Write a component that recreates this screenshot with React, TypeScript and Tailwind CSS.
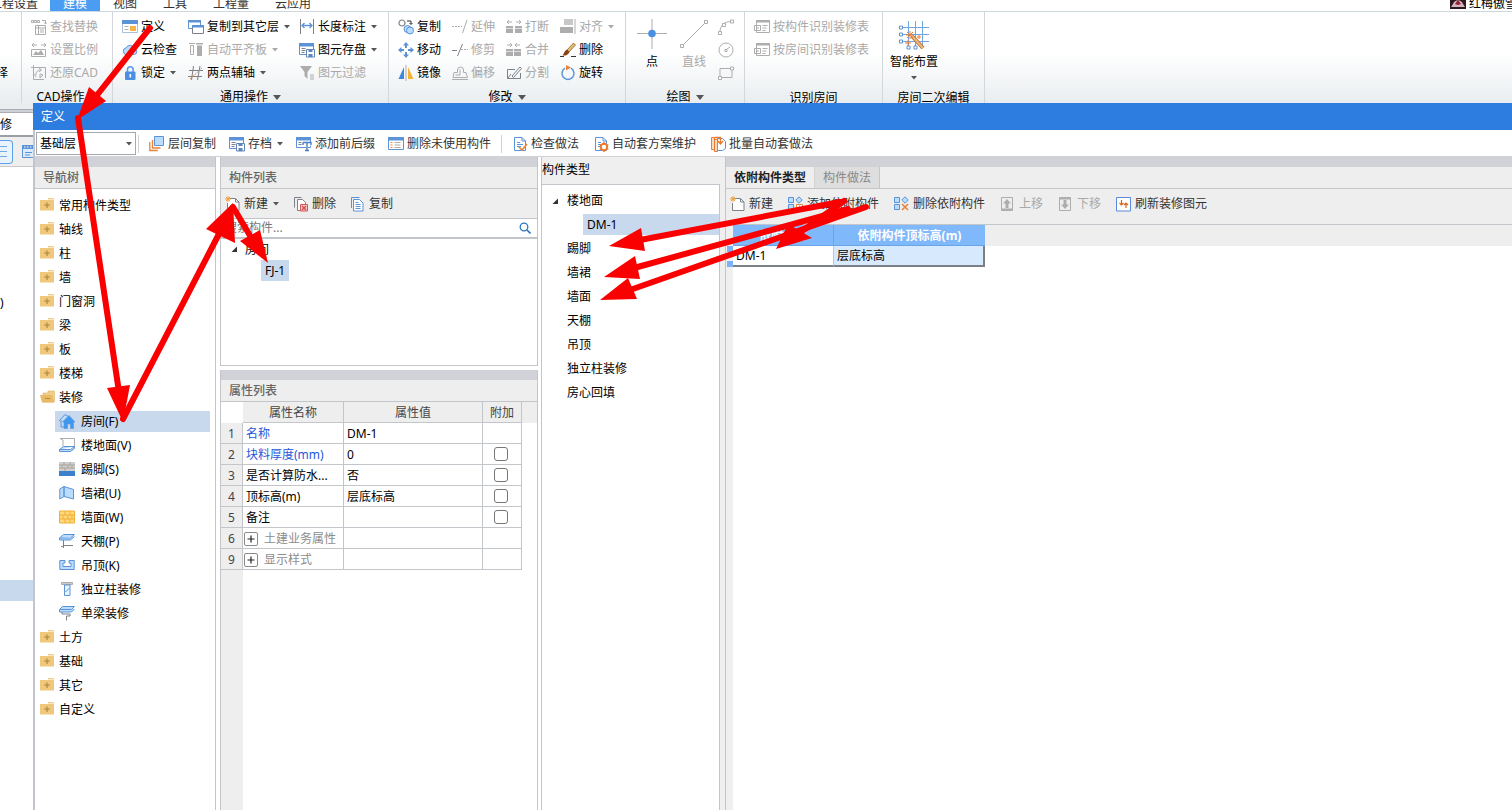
import type { ReactNode } from "react";
import clsx from "clsx";

const B = "#5b93d6";
const LB = "#b9dcff";
const G = "#adadad";
const O = "#e8833a";
const D = "#7d8188";

const sheet = (color: string) => (
  <>
    <path d="M2.500 1.500h7.500l3.500 3.500v9.500h-11z" fill="#fff" stroke={color} />
    <path d="M10 1.500V5h3.500M5 6.500h3M5 8.500h6M5 10.500h4" stroke={color} fill="none" />
  </>
);

const dependent = (
  <>
    <path d="M.5 1.500h5v5h-5zM.5 8.500h5v5h-5z" fill={LB} stroke={B} />
    <path d="M11 .8 14.200 4 11 7.200 7.800 4z" fill={LB} stroke={B} />
  </>
);

const ICONS: Record<string, ReactNode> = {
  find: (
    <>
      <path d="M.5 1.500h2v2h-2zM3.500 1.500h2v2h-2zM6.500 1.500h2v2h-2z" stroke={G} fill="none" />
      <path d="M11 1.500h3.500v3M13 3.500l1.500 1.500L16 3.500" stroke={G} fill="none" />
      <path d="M4.500 6.500h10v9h-10zM4.500 9h10M7.500 6.500v9M9 11h4M9 13h4" stroke={G} fill="none" />
    </>
  ),
  ratio: (
    <>
      <path d="M1 3h5M3 1 1 3l2 2M10 3h5M13 1l2 2-2 2M.5 7.500h14v7H.5z" stroke={G} fill="none" />
      <path d="m2 13 3-4 2 2 3-3 3 5z" fill={G} />
    </>
  ),
  restore: (
    <path
      d="M2.500 0v14.500H13M0 2.500h14.500V13M5 10c0-4 2-5 5-5M8 3l2.500 2L8 7M5 12l-2-3M9 9l3 1-3 3z"
      stroke={G}
      fill="none"
    />
  ),
  define: (
    <>
      <path d="M.5 1.500h15v12H.5z" fill="#fff" stroke="#a9bfdc" />
      <path d="M0 1h16v4H0z" fill={B} />
      <path d="M2.500 7.500h4M2.500 10.500h4" stroke={G} />
      <path d="M8 7h6v5H8z" fill="#f6b544" />
    </>
  ),
  cloud: (
    <>
      <path d="M4 12.500a3.300 3.300 0 0 1 0-6.500 4.500 4.500 0 0 1 8.500 1 2.800 2.800 0 0 1 0 5.500z" fill={LB} stroke={B} />
      <path d="m6 9 2 2 4-4" stroke={B} fill="none" strokeWidth="1.500" />
    </>
  ),
  lock: (
    <>
      <path d="M5.500 7V4.500a2.800 2.800 0 0 1 5.600 0V7" fill="none" stroke="#5a9ae8" strokeWidth="1.600" />
      <rect x="3" y="6.500" width="10.500" height="8.500" rx="1" fill="#4a8fe2" />
      <path d="M8.300 9v3.500" stroke="#fff" strokeWidth="1.600" />
    </>
  ),
  copyLayer: (
    <>
      <path d="M.5 1.500h12v8H.5z" fill="#fff" stroke={B} />
      <path d="M0 1h13v2.500H0z" fill={B} />
      <path d="M4.500 6.500h11v8h-11z" fill="#fff" stroke={D} />
      <path d="M4 6h12v2.500H4z" fill={B} />
    </>
  ),
  align2: (
    <>
      <path d="M1 1.500h6M2.500 3.500h3v9h-3z" stroke={G} fill="none" />
      <path d="M8 1h7v1.500H8zM9 3.500h5V14H9z" fill={G} />
    </>
  ),
  axis: (
    <>
      <path d="M1 5.500h14M0 11.500h14M5.500 1 3.500 15M12 1 9.500 15" stroke={D} />
      <path d="M2 14 14 3" stroke={O} strokeDasharray="2 1" />
    </>
  ),
  length: (
    <>
      <path d="M1.500 0v15M14.500 0v15" stroke={D} />
      <path d="M3 6.500h10M5.500 4 3 6.500 5.500 9M10.500 4l2.500 2.500L10.500 9" fill="none" stroke={B} strokeWidth="1.300" />
    </>
  ),
  save: (
    <>
      <path d="M.5 1.500h14v11H.5z" fill="#fff" stroke={B} />
      <path d="M0 1h15v3.500H0z" fill={B} />
      <path d="M2.500 6.500h4M2.500 8.500h4M2.500 10.500h3" stroke={D} />
      <path d="M7.500 7.500h8v7.500h-8z" fill="#fff" stroke="#5f86b8" />
      <path d="M9.500 7.500h4V10h-4zM9.500 12h4v3h-4z" fill="#5f86b8" />
    </>
  ),
  filter: (
    <>
      <path d="M1 1h12L8.500 7v7L5.500 11V7z" fill={G} />
      <path d="M11 10h4M11 12h4M11 14h4" stroke={G} />
    </>
  ),
  copyEl: (
    <>
      <circle cx="4" cy="4" r="3" fill="#fff" stroke={D} strokeWidth="1.200" />
      <circle cx="9.500" cy="10" r="3.500" fill={LB} stroke={B} />
      <circle cx="12" cy="11.500" r="3.500" fill={LB} stroke={B} />
      <path d="M9 2h4v3M11.500 4 13 5.500 14.500 4" fill="none" stroke="#333" />
    </>
  ),
  move: (
    <path
      d="M8 0l3 3.500H9V6H7V3.500H5zM8 16l3-3.500H9V10H7v2.500H5zM0 8l3.500-3v2H6v2H3.500v2zM16 8l-3.500-3v2H10v2h2.500v2z"
      fill={B}
    />
  ),
  mirror: (
    <>
      <path d="M6 2v12H.5z" fill="#3f86dd" />
      <path d="M10 2v12h5.500z" fill="#f7b231" />
      <path d="M8 0v16" stroke={G} />
    </>
  ),
  extend: (
    <>
      <path d="M0 7.500h10" stroke={G} strokeDasharray="2 1" />
      <path d="M15 1l-4.500 13" stroke={G} />
    </>
  ),
  trim: (
    <>
      <path d="M0 8.500h5M10.500 2 5.500 14" stroke={D} />
      <path d="M9 7.500h7" stroke={G} strokeDasharray="2 1" />
    </>
  ),
  offset: (
    <path
      d="M5.500 7.500V5a3 3 0 0 1 6 0v2.500h2.500l1.500 5H1l1-5zM3.500 10H8V4.500M0 14.500h16"
      stroke={G}
      fill="none"
    />
  ),
  break: (
    <>
      <path d="M0 7h7v7H0zM9 7h7v7H9z" fill={G} />
      <path d="M0 9.500h16" stroke="#fff" strokeWidth=".6" />
      <path d="M1 3h5M3 1 1 3l2 2M10 3h5M13 1l2 2-2 2" stroke={G} fill="none" />
    </>
  ),
  merge: (
    <>
      <path d="M0 7h7v7H0zM8 7h7v7H8z" fill={G} />
      <path d="M0 9.500h16" stroke="#fff" strokeWidth=".6" />
      <path d="M1 3h5M4 1l2 2-2 2M9 3h5M11 1 9 3l2 2" stroke={G} fill="none" />
    </>
  ),
  split: <path d="M9 4.500H1.500v9h13V8M1.500 13.500 5 9M6 11l8-9 1.500 1.500-8 9z" stroke={D} fill="none" />,
  alignTo: (
    <>
      <path d="M4 0h9v6H4z" fill="#c8c8c8" />
      <path d="M0 8h13v6H0z" fill={G} />
      <path d="M15 0v15" stroke={G} />
    </>
  ),
  brush: (
    <>
      <path d="m13.500 1 2 2L9 10 7 8z" fill="#e9b96c" stroke="#7a5326" strokeWidth=".7" />
      <path d="M7 7.500 9.500 10c-1.500 3-4 4-7 3.500C4 12 4 9 7 7.500z" fill="#8a4413" />
      <path d="M0 14.500h4M11 14.500h5" stroke="#333" />
    </>
  ),
  rotate: (
    <>
      <path d="M5 3.200A6 6 0 1 0 11 3.200" fill="none" stroke={B} strokeWidth="1.500" />
      <path d="m6 0 5 2.500L6 5.500z" fill={O} />
    </>
  ),
  arc: (
    <>
      <path d="M2 13C2 7 6 2.500 13 2.500" fill="none" stroke={G} />
      <path d="M.5 12.500h3v3h-3zM4.500 4.500h3v3h-3zM12.500 1h3v3h-3z" fill="#fff" stroke={G} />
    </>
  ),
  circle: (
    <>
      <circle cx="8" cy="8" r="7" fill="none" stroke={G} />
      <path d="M7 7.500h2v2H7zM9 7l3-2" fill="none" stroke={G} />
    </>
  ),
  rect: (
    <>
      <path d="M2 3.500h12v9H2z" fill="none" stroke={G} />
      <path d="M.5 11.500h3v3h-3zM12.500 2h3v3h-3z" fill="#fff" stroke={G} />
    </>
  ),
  identify: (
    <>
      <path d="M2.500 1.500h13v12h-13z" fill="none" stroke={G} />
      <path d="M2 1h14v2.500H2z" fill={G} />
      <path d="M.5 6.500h6v5h-6zM2 9h3M8.500 6.500h5M8.500 9h4M8.500 11.500h3" fill="none" stroke={G} />
    </>
  ),
  layers: (
    <>
      <path d="M.8 6v8.500h8" fill="none" stroke={O} strokeWidth="1.300" />
      <path d="M3.500 4v8h8" fill="none" stroke={O} strokeWidth="1.300" />
      <path d="M5.500.5h9v9h-9z" fill={LB} stroke={B} />
    </>
  ),
  affix: (
    <>
      <path d="M.5 1.500h14v10H.5z" fill="#fff" stroke={B} />
      <path d="M0 1h15v3.500H0z" fill={B} />
      <path d="M2.500 6.500h3M2.500 8.500h3" stroke={D} />
      <path d="M6 6h9.500v3.500H12V13h2v2.500H8V13h2V9.500H6z" fill="#fff" />
      <path d="M7 6.500h8v2.500M7 6.500V9M11 6.500v8M9 14.500h4" fill="none" stroke="#4b7fc2" strokeWidth="1.400" />
    </>
  ),
  unused: (
    <>
      <path d="M.5 1.500h15v12H.5z" fill="#fff" stroke={B} />
      <path d="M0 1h16v3.500H0z" fill={B} />
      <path d="M2.500 6.500h2M2.500 9h2M2.500 11.500h2" stroke={O} />
      <path d="M6.500 6.500h6M6.500 9h6M6.500 11.500h6" stroke={G} />
    </>
  ),
  check: (
    <>
      {sheet(B)}
      <path d="m7 11 3 3 5-6" fill="none" stroke={O} strokeWidth="1.600" />
    </>
  ),
  gear: (
    <>
      {sheet(B)}
      <circle cx="11" cy="11" r="3.200" fill="#fff" stroke="#e97a30" strokeWidth="2" />
      <path
        d="M11 6v2M11 14v2M6.700 8.500l1.500 1M13.800 12.500l1.500 1M6.700 13.500l1.500-1M13.800 9.500l1.500-1"
        stroke="#e97a30"
        strokeWidth="1.500"
      />
    </>
  ),
  batch: (
    <>
      <path d="M7.500 2.500h5l3 3v7l-3 2h-5z" fill="#fff" stroke={B} />
      <path d="M1.500 1.500h3v12h-3zM4.500 3.500h3v12h-3z" fill="#fbd9bd" stroke="#e97a30" />
      <path d="M4.500 1.500h6V7M8 5l2.500 3L13 5" fill="none" stroke="#e97a30" strokeWidth="1.300" />
    </>
  ),
  new: (
    <>
      <path d="M4.500 2.500h6l3.500 3.500v8.500H2.500V7" fill="#fff" stroke={D} />
      <path d="M10.500 2.500V6H14" fill="none" stroke={D} />
      <path d="M3 0v6M0 3h6M1 1l4 4M5 1 1 5" stroke="#f2a03a" />
    </>
  ),
  delete: (
    <>
      <path d="M1.500 11.500V1.500h7" fill="none" stroke={D} />
      <path d="M4.500 3.500h5l3 3v8h-8z" fill="#fff" stroke={D} />
      <path d="M7.500 8.500h7v6.500h-7z" fill="#f6c9c7" stroke="#cf5a57" />
      <path d="m9 10 4 4M13 10l-4 4" stroke="#cf4a47" strokeWidth="1.200" />
    </>
  ),
  copy: (
    <>
      <path d="M1.500 12V1.500h8" fill="none" stroke={B} />
      <path d="M3.500 3.500h6l3.500 3.500v8h-9.500z" fill="#fff" stroke={B} />
      <path d="M5.500 8.500h5M5.500 10.500h5M5.500 12.500h5M5.500 6.500h3" stroke={B} />
    </>
  ),
  depAdd: (
    <>
      {dependent}
      <path d="M8.500 8.500h6v6h-6z" fill="#fff" stroke={O} />
      <path d="M11.500 9.500v4M9.500 11.500h4" stroke={O} />
    </>
  ),
  depDel: (
    <>
      {dependent}
      <path d="m8 8 6 6M14 8l-6 6" stroke={O} strokeWidth="1.600" />
    </>
  ),
  up: (
    <>
      <path d="M1.500 1.500h11v13h-11z" fill="none" stroke={G} />
      <path d="m7 3 4 4.500H8.500V12h-3V7.500H3z" fill={G} />
      <path d="M2 13.500h10" stroke={G} strokeWidth="2" />
    </>
  ),
  down: (
    <>
      <path d="M1.500 1.500h11v13h-11z" fill="none" stroke={G} />
      <path d="m7 13 4-4.500H8.500V4h-3v4.500H3z" fill={G} />
      <path d="M2 2.500h10" stroke={G} strokeWidth="2" />
    </>
  ),
  refresh: (
    <>
      <path d="M.5 1.500h14V15H.5z" fill="#fff" stroke="#5b8bdc" />
      <path d="M5.500 4v5M3.500 7l2 2 2-2M10 12V7M8 9l2-2 2 2" fill="none" stroke="#d8651b" strokeWidth="1.200" />
    </>
  ),
  list: (
    <>
      <path d="M.5 1.500h15v12H.5z" fill="#dcecfd" stroke={B} />
      <path d="M0 1h16v4H0z" fill={B} />
      <path d="M2 3h1.500M5 3h1.500M8 3h1.500" stroke="#fff" />
      <path d="M3 8.500h7M3 11h5" stroke={B} />
    </>
  ),
  folder: (
    <>
      <path d="M8 1h6v1.500H8z" fill="#f3cf8b" />
      <path d="M0 3h14v10.500H0z" fill="#efc77d" />
      <path d="M7 5.500v5.500M4.300 8.200h5.400" stroke="#b98e42" strokeWidth="1.300" />
    </>
  ),
  folderOpen: (
    <>
      <path d="M8 2h6.500v11H3V4h5z" fill="#f0cd8d" stroke="#dcb468" strokeWidth=".6" />
      <path d="M0 6h12l2 7.500H2z" fill="#e8ba66" />
      <path d="M5 9.500h5" stroke="#b98e42" />
    </>
  ),
  room: (
    <>
      <path d="M0 8 6 1.500l3 2M2 7v7h4" fill={LB} stroke={B} />
      <path d="M10 2.500 16 9h-1.500v6.500h-3V11h-3v4.500H5V9H3.500z" fill="#3f97f0" stroke={B} strokeWidth=".6" />
    </>
  ),
  floor: (
    <>
      <path d="M1 1.500h14.500v8M1 1.500l3 1.500v6" stroke={G} fill="none" />
      <path d="M4.500 9.500h11l-4 3H.5zM.5 12.500v2h11l4-3v-2" fill={LB} stroke={B} />
    </>
  ),
  skirting: (
    <>
      <path d="M0 1h16v9H0z" fill="#cfcfcf" />
      <path d="M0 4h16M0 7h16M5 1v3M11 1v3M3 4v3M9 4v3M13 4v3M6 7v3" stroke="#aaa39a" />
      <path d="M0 10h16v5H0z" fill="#3d80cc" />
    </>
  ),
  dado: <path d="M.8 4 5 1.500v10L.8 14zM5 1.500l9.500 3V14l-9.500-2.500z" fill={LB} stroke={B} />,
  wall: (
    <>
      <path d="M.5 2h15v12H.5z" fill="#ffd97a" stroke="#f0ae35" />
      <path d="M1 6h14M1 10h14M6 2v4M11 2v4M4 6v4M9 6v4M13 6v4M6 10v4M11 10v4" stroke="#f0ae35" />
    </>
  ),
  ceiling: (
    <>
      <path d="M4.500 6v9M2 14l3-1.500H14" stroke={D} fill="none" />
      <path d="M4.500 1.500h11l-4 3.500H.5zM.5 5v2h11l4-3.500" fill={LB} stroke={B} />
    </>
  ),
  suspended: <path d="M.8 3.500H6V6H4v3.500h8V6h-2V3.500h5.200v9H.8z" fill={LB} stroke={B} />,
  column: (
    <>
      <path d="M2.500 1.500h11v2h-11z" fill="#c9c9c9" stroke={G} />
      <path d="M5.500 4h5.500v10.500H5.500z" fill="#eaf4ff" stroke={B} />
      <path d="m6.500 11 4-4" stroke={B} />
    </>
  ),
  beam: (
    <>
      <path d="M3.500 1.500h12l-3 3H.5zM.5 4.500V7h12l3-3" fill={LB} stroke={B} />
      <path d="M3 7v2h8v2H7.500v4.500" fill="none" stroke={D} />
    </>
  ),
};

function Icon({ name, className }: { name: string; className?: string }) {
  return (
    <svg viewBox="0 0 16 16" className={clsx("size-4 shrink-0", className)} aria-hidden="true">
      {ICONS[name]}
    </svg>
  );
}

function Caret({ className }: { className?: string }) {
  return (
    <svg viewBox="0 0 6 4" className={clsx("h-1 w-1.5 shrink-0", className)} aria-hidden="true">
      <path d="M0 0h6L3 3.500z" fill="currentColor" />
    </svg>
  );
}

function Expander() {
  return (
    <svg viewBox="0 0 7 7" className="size-[7px] shrink-0" aria-hidden="true">
      <path d="M6 .5V6H.5z" fill="#333" />
    </svg>
  );
}

interface Command {
  icon: string;
  label: string;
  disabled?: boolean;
  menu?: boolean;
}

function CommandButton({ icon, label, disabled, menu }: Command) {
  return (
    <button
      type="button"
      disabled={disabled}
      className="flex h-[23px] items-center gap-[3px] disabled:text-[#a9a9a9]"
    >
      <Icon name={icon} />
      {label}
      {menu && <Caret className={clsx("ml-[2px]", disabled ? "text-[#a9a9a9]" : "text-[#555]")} />}
    </button>
  );
}

function CommandColumn({ items, className }: { items: Command[]; className?: string }) {
  return (
    <div className={clsx("flex shrink-0 flex-col items-start", className)}>
      {items.map((c) => (
        <CommandButton key={c.label} {...c} />
      ))}
    </div>
  );
}

interface RibbonGroupProps {
  label: string;
  menu?: boolean;
  className?: string;
  children?: ReactNode;
}

function RibbonGroup({ label, menu, className, children }: RibbonGroupProps) {
  return (
    <section
      className={clsx("flex shrink-0 flex-col border-r border-[#d3d7db] pt-[3px] pl-[9px]", className)}
      aria-label={label}
    >
      <div className={clsx("flex shrink-0", menu ? "h-[73px]" : "h-[74px]")}>{children}</div>
      <div className="-ml-[9px] flex h-[18px] shrink-0 items-center justify-center gap-[5px] leading-[18px]">
        {label}
        {menu && (
          <svg viewBox="0 0 8 5" className="h-[5px] w-2 shrink-0" aria-hidden="true">
            <path d="M0 0h8L4 5z" fill="#555" />
          </svg>
        )}
      </div>
    </section>
  );
}

const CAD: Command[] = [
  { icon: "find", label: "查找替换", disabled: true },
  { icon: "ratio", label: "设置比例", disabled: true },
  { icon: "restore", label: "还原CAD", disabled: true },
];

const GENERAL: Command[][] = [
  [
    { icon: "define", label: "定义" },
    { icon: "cloud", label: "云检查" },
    { icon: "lock", label: "锁定", menu: true },
  ],
  [
    { icon: "copyLayer", label: "复制到其它层", menu: true },
    { icon: "align2", label: "自动平齐板", disabled: true, menu: true },
    { icon: "axis", label: "两点辅轴", menu: true },
  ],
  [
    { icon: "length", label: "长度标注", menu: true },
    { icon: "save", label: "图元存盘", menu: true },
    { icon: "filter", label: "图元过滤", disabled: true },
  ],
];

const MODIFY: Command[][] = [
  [
    { icon: "copyEl", label: "复制" },
    { icon: "move", label: "移动" },
    { icon: "mirror", label: "镜像" },
  ],
  [
    { icon: "extend", label: "延伸", disabled: true },
    { icon: "trim", label: "修剪", disabled: true },
    { icon: "offset", label: "偏移", disabled: true },
  ],
  [
    { icon: "break", label: "打断", disabled: true },
    { icon: "merge", label: "合并", disabled: true },
    { icon: "split", label: "分割", disabled: true },
  ],
  [
    { icon: "alignTo", label: "对齐", disabled: true, menu: true },
    { icon: "brush", label: "删除" },
    { icon: "rotate", label: "旋转" },
  ],
];

const IDENTIFY: Command[] = [
  { icon: "identify", label: "按构件识别装修表", disabled: true },
  { icon: "identify", label: "按房间识别装修表", disabled: true },
];

const GENERAL_WIDTHS = ["w-[66px]", "w-[111px]", "w-[88px]"];

function Ribbon() {
  return (
    <div className="flex h-[91px] overflow-hidden bg-linear-to-b from-white from-45% to-[#e9edf0]">
      <div className="flex w-[22px] shrink-0 flex-col items-end border-r border-[#d3d7db] pt-[49px] pr-[13px]">
        <button type="button" className="h-[23px] whitespace-nowrap">
          选择
        </button>
      </div>
      <RibbonGroup label="CAD操作" menu className="w-[91px]">
        <CommandColumn items={CAD} />
      </RibbonGroup>
      <RibbonGroup label="通用操作" menu className="w-[276px]">
        {GENERAL.map((items, i) => (
          <CommandColumn key={items[0].label} items={items} className={GENERAL_WIDTHS[i]} />
        ))}
      </RibbonGroup>
      <RibbonGroup label="修改" menu className="w-[237px]">
        {MODIFY.map((items) => (
          <CommandColumn key={items[0].label} items={items} className="w-[54px]" />
        ))}
      </RibbonGroup>
      <RibbonGroup label="绘图" menu className="w-[119px]">
        <button type="button" className="flex w-[34px] flex-col items-center gap-1 pt-1">
          <svg viewBox="0 0 30 30" className="size-[30px]" aria-hidden="true">
            <path d="M15 0v30M0 14.500h30" stroke={G} />
            <circle cx="15" cy="14.500" r="3.800" fill="#4a90e2" />
          </svg>
          <span className="leading-[18px]">点</span>
        </button>
        <button
          type="button"
          disabled
          className="ml-2 flex w-[34px] flex-col items-center gap-1 pt-1 text-[#a9a9a9]"
        >
          <svg viewBox="0 0 30 30" className="size-[30px]" aria-hidden="true">
            <path d="M3 27 27 3" stroke={G} />
            <path d="M1.500 25.500h3v3h-3zM25.500 1.500h3v3h-3z" fill="#fff" stroke={G} />
          </svg>
          <span className="leading-[18px]">直线</span>
        </button>
        <div className="ml-[7px] flex flex-col">
          {["arc", "circle", "rect"].map((n) => (
            <button key={n} type="button" disabled aria-label={n} className="flex h-[23px] items-center">
              <Icon name={n} />
            </button>
          ))}
        </div>
      </RibbonGroup>
      <RibbonGroup label="识别房间" className="w-[138px]">
        <CommandColumn items={IDENTIFY} />
      </RibbonGroup>
      <RibbonGroup label="房间二次编辑" className="w-[102px]">
        <button type="button" className="-ml-0.5 flex w-12 flex-col items-center gap-[3px] pt-[5px] whitespace-nowrap">
          <svg viewBox="0 0 30 30" className="size-[30px] shrink-0" aria-hidden="true">
            <path d="M3 7.500h27M3 14.500h27M3 21.500h27M9.500 1v27M16.500 1v27M23.500 1v27" stroke="#6fa5e0" />
            <path
              d="M.5 6h3v3h-3zM.5 13h3v3h-3zM.5 20h3v3h-3zM8 26h3v3H8zM15 26h3v3h-3z"
              fill="#fff"
              stroke={B}
            />
            <path d="m13 16 11 12" stroke="#b9773f" strokeWidth="4" />
            <path d="m13 16 11 12" stroke="#f0b67a" strokeWidth="2" />
            <path
              d="M11 11v8M7 15h8M8 12l6 6M14 12l-6 6M9 20v6M6 23h6M20 15v4M18 17h4"
              stroke="#ee7d33"
            />
          </svg>
          <span className="leading-[18px]">智能布置</span>
          <Caret className="mt-[2px] text-[#555]" />
        </button>
      </RibbonGroup>
    </div>
  );
}

const MENU_TABS = ["建模", "视图", "工具", "工程量", "云应用"];

function MenuBar() {
  return (
    <nav className="flex h-3 items-end overflow-hidden border-b border-[#cfd8dc] bg-white leading-[14px] text-[#333]">
      <button type="button" className="flex w-[50px] shrink-0 justify-end pr-3 whitespace-nowrap">
        工程设置
      </button>
      {MENU_TABS.map((t) => (
        <button
          type="button"
          key={t}
          className={clsx("shrink-0 px-[13px]", t === "建模" && "bg-[#4a9df3] text-white")}
        >
          {t}
        </button>
      ))}
      <div className="ml-auto flex w-[62px] shrink-0 items-end gap-[3px] whitespace-nowrap text-black">
        <svg viewBox="0 0 16 16" className="mb-[2px] size-4 shrink-0" aria-hidden="true">
          <path d="M0 0h16v16H0z" fill="#2b1a20" />
          <path d="M3 11c2-5 8-5 10 0l2 3H1z" fill="#d9b4bb" />
          <path d="m5 11 3-4 3 4-3 1z" fill="#8e1f36" />
        </svg>
        红梅傲雪
      </div>
    </nav>
  );
}

// Slice of the main window that stays visible beside the dialog
function MainWindowEdge() {
  return (
    <aside className="flex w-[33px] shrink-0 flex-col overflow-hidden bg-white">
      <div className="h-1.5 bg-[#e9edf0]" />
      <div className="h-1 border-y border-[#a9adb3] bg-[#cdd0d5]" />
      <div className="h-[22px] pt-px leading-[22px]">修</div>
      <div className="h-[2px] bg-[#9a9ea5]" />
      <div className="flex h-[30px] items-center justify-between border-b border-[#c9c9c9] bg-[#eeeeee]">
        <button
          type="button"
          aria-label="列表"
          className="flex h-6 w-[13px] items-center rounded-r border border-l-0 border-[#5aa2ea] bg-[#e8f3fe]"
        >
          <svg viewBox="0 0 8 14" className="h-3.5 w-2" aria-hidden="true">
            <path d="M0 1.500h7M0 6.500h7M0 11.500h7" stroke="#6fa9ea" />
          </svg>
        </button>
        <div className="w-[11px] overflow-hidden">
          <Icon name="list" />
        </div>
      </div>
      <div className="mt-[126px] h-5 leading-5">)</div>
      <div className="mt-[267px] h-[21px] bg-[#c8d9ee]" />
    </aside>
  );
}

function PanelBand() {
  return <div className="h-2.5 shrink-0 bg-[#d0d2d8]" />;
}

function PanelTitle({ children }: { children: ReactNode }) {
  return (
    <h2 className="h-[22px] shrink-0 border-b border-[#c2c5c9] bg-[#eeeeee] pl-2 leading-[22px] font-medium text-[#666]">
      {children}
    </h2>
  );
}

const FOLDERS_TOP = ["常用构件类型", "轴线", "柱", "墙", "门窗洞", "梁", "板", "楼梯"];
const FOLDERS_BOTTOM = ["土方", "基础", "其它", "自定义"];
const DECOR = [
  { icon: "room", label: "房间(F)" },
  { icon: "floor", label: "楼地面(V)" },
  { icon: "skirting", label: "踢脚(S)" },
  { icon: "dado", label: "墙裙(U)" },
  { icon: "wall", label: "墙面(W)" },
  { icon: "ceiling", label: "天棚(P)" },
  { icon: "suspended", label: "吊顶(K)" },
  { icon: "column", label: "独立柱装修" },
  { icon: "beam", label: "单梁装修" },
];

function FolderRow({ label, open }: { label: string; open?: boolean }) {
  return (
    <li>
      <button type="button" className="flex h-6 items-center gap-[3px] pl-[5px]">
        <Icon name={open ? "folderOpen" : "folder"} />
        <span className="pt-0.5">{label}</span>
      </button>
    </li>
  );
}

function NavTree() {
  return (
    <section className="flex w-[181px] shrink-0 flex-col border-r border-[#c2c5cc]">
      <PanelBand />
      <PanelTitle>导航树</PanelTitle>
      <ul className="pt-1">
        {FOLDERS_TOP.map((f) => (
          <FolderRow key={f} label={f} />
        ))}
        <FolderRow label="装修" open />
        {DECOR.map((d, i) => (
          <li key={d.label} className="flex h-6 items-center pr-[5px] pl-5">
            <button
              type="button"
              className={clsx("flex h-[21px] flex-1 items-center gap-1.5 pl-1", i === 0 && "bg-[#c8d9ee]")}
            >
              <Icon name={d.icon} />
              <span className="pt-0.5">{d.label}</span>
            </button>
          </li>
        ))}
        {FOLDERS_BOTTOM.map((f) => (
          <FolderRow key={f} label={f} />
        ))}
      </ul>
    </section>
  );
}

function ComponentList() {
  return (
    <section className="flex flex-col border border-t-0 border-[#c2c5c9]">
      <PanelBand />
      <PanelTitle>构件列表</PanelTitle>
      <div className="flex h-[30px] items-center gap-[14px] border-b border-[#c2c5c9] bg-[#eeeeee] pl-1 text-[#333]">
        <CommandButton icon="new" label="新建" menu />
        <CommandButton icon="delete" label="删除" />
        <CommandButton icon="copy" label="复制" />
      </div>
      <div className="flex h-5 items-center border-b-2 border-[#c2c5c9] pr-1.5">
        <input
          type="text"
          aria-label="搜索构件"
          placeholder="搜索构件..."
          className="h-[18px] min-w-0 flex-1 pl-1 outline-none placeholder:text-[#777]"
        />
        <svg viewBox="0 0 12 12" className="size-3" aria-hidden="true">
          <circle cx="5" cy="5" r="3.800" fill="none" stroke="#2a76c6" strokeWidth="1.300" />
          <path d="m8 8 3.500 3.500" stroke="#2a76c6" strokeWidth="1.600" />
        </svg>
      </div>
      <div className="h-[126px]">
        <button type="button" className="flex h-[21px] items-center gap-[7px] pl-2.5">
          <Expander />
          房间
        </button>
        <button type="button" className="ml-10 block h-[21px] bg-[#c8d9ee] px-1">
          FJ-1
        </button>
      </div>
    </section>
  );
}

interface Property {
  no: number;
  name: string;
  value?: string;
  blue?: boolean;
  check?: boolean;
  group?: boolean;
}

const PROPERTIES: Property[] = [
  { no: 1, name: "名称", value: "DM-1", blue: true },
  { no: 2, name: "块料厚度(mm)", value: "0", blue: true, check: true },
  { no: 3, name: "是否计算防水...", value: "否", check: true },
  { no: 4, name: "顶标高(m)", value: "层底标高", check: true },
  { no: 5, name: "备注", check: true },
  { no: 6, name: "土建业务属性", group: true },
  { no: 9, name: "显示样式", group: true },
];

function PropertyList() {
  return (
    <section className="mt-1 flex flex-1 flex-col border-x border-[#c2c5c9]">
      <PanelBand />
      <PanelTitle>属性列表</PanelTitle>
      <div className="bg-linear-to-b from-[#eeeeee] from-[21px] to-transparent to-[21px]">
        <table className="w-[301px] table-fixed border-separate border-spacing-0">
          <thead>
            <tr className="h-[21px] bg-[#eeeeee] text-[#444]">
              <th className="w-[22px] bg-white p-0" aria-label="序号" />
              <th className="w-[101px] border-r border-b border-[#c2c5c9] p-0 pt-0.5 font-normal">属性名称</th>
              <th className="w-[139px] border-r border-b border-[#c2c5c9] p-0 pt-0.5 font-normal">属性值</th>
              <th className="w-[39px] border-r border-b border-[#c2c5c9] p-0 pt-0.5 font-normal">附加</th>
            </tr>
          </thead>
          <tbody>
            {PROPERTIES.map((p) => (
              <tr key={p.no} className="h-[21px]">
                <td className="border-r border-b border-[#c2c5c9] bg-[#eeeeee] p-0 pt-0.5 text-center text-[#444]">
                  {p.no}
                </td>
                <td
                  className={clsx(
                    "border-r border-b border-[#c2c5c9] p-0 pt-0.5 pl-[3px] whitespace-nowrap",
                    p.blue && "text-[#1f57d8]",
                    p.group && "text-[#8c8c8c]"
                  )}
                >
                  {p.group ? (
                    <span className="-ml-0.5 flex items-center gap-1.5">
                      <button
                        type="button"
                        aria-label={p.name}
                        className="flex size-3.5 items-center justify-center rounded-xs border border-[#8a8a8a]"
                      >
                        <svg viewBox="0 0 8 8" className="size-2" aria-hidden="true">
                          <path d="M4 .5v7M.5 4h7" stroke="#222" strokeWidth="1.200" />
                        </svg>
                      </button>
                      {p.name}
                    </span>
                  ) : (
                    p.name
                  )}
                </td>
                <td className="border-r border-b border-[#c2c5c9] p-0 pt-0.5 pl-[3px]">{p.value}</td>
                <td className="border-r border-b border-[#c2c5c9] p-0 pr-0.5">
                  {p.check && (
                    <input
                      type="checkbox"
                      aria-label={`附加 ${p.name}`}
                      className="mx-auto block size-3.5 appearance-none rounded-[3px] border border-[#777] bg-white"
                    />
                  )}
                </td>
              </tr>
            ))}
          </tbody>
        </table>
      </div>
      <div className="w-[22px] flex-1 bg-[#eeeeee]" />
    </section>
  );
}

const TYPES = ["踢脚", "墙裙", "墙面", "天棚", "吊顶", "独立柱装修", "房心回填"];

function TypeList() {
  return (
    <section className="flex w-[185px] shrink-0 flex-col border-x border-[#c2c5c9] bg-[#efefef] pr-[5px]">
      <h2 className="h-[27px] leading-[26px] font-normal">构件类型</h2>
      <ul className="flex-1 border-t border-r border-[#c2c5c9] bg-white pt-[3px]">
        <li>
          <button type="button" className="flex h-6 items-center gap-2 pt-0.5 pl-2.5">
            <Expander />
            楼地面
          </button>
        </li>
        <li className="flex h-6 items-center pl-[41px]">
          <button type="button" className="h-[21px] flex-1 bg-[#c8d9ee] pt-0.5 pl-1 text-left">
            DM-1
          </button>
        </li>
        {TYPES.map((t) => (
          <li key={t}>
            <button type="button" className="h-6 pt-0.5 pl-[25px]">
              {t}
            </button>
          </li>
        ))}
      </ul>
    </section>
  );
}

const DEPENDENT_COMMANDS: Command[] = [
  { icon: "new", label: "新建" },
  { icon: "depAdd", label: "添加依附构件" },
  { icon: "depDel", label: "删除依附构件" },
  { icon: "up", label: "上移", disabled: true },
  { icon: "down", label: "下移", disabled: true },
  { icon: "refresh", label: "刷新装修图元" },
];

function DependentPanel() {
  return (
    <section className="flex min-w-0 flex-1 flex-col">
      <PanelBand />
      <div role="tablist" className="flex h-[22px] border-b border-[#c2c5c9] bg-[#eeeeee]">
        <button
          type="button"
          role="tab"
          aria-selected
          className="w-[89px] border-r border-[#d3d3d3] font-bold text-[#222]"
        >
          依附构件类型
        </button>
        <button
          type="button"
          role="tab"
          aria-selected={false}
          className="w-[65px] border-r border-[#c2c5c9] bg-[#dedede] text-[#888]"
        >
          构件做法
        </button>
      </div>
      <div className="flex h-9 items-center gap-[15px] border-b border-[#c2c5c9] bg-[#eeeeee] pb-1.5 pl-1 text-[#333]">
        {DEPENDENT_COMMANDS.map((c) => (
          <CommandButton key={c.label} {...c} />
        ))}
      </div>
      <div className="flex flex-1">
        <div className="flex w-[7px] shrink-0 flex-col bg-[#efefef] pt-[21px]">
          <div className="size-1.5 self-end bg-[#7ab3f7]" />
          <div className="mt-[9px] size-1.5 self-end bg-[#7ab3f7]" />
        </div>
        <div className="flex-1">
          <div className="bg-linear-to-b from-[#eeeeee] from-[21px] to-transparent to-[21px]">
            <table className="w-[252px] table-fixed border-separate border-spacing-0">
              <thead>
                <tr className="h-[21px] bg-[#7fb8fb] text-white">
                  <th className="w-[101px] border-r border-b border-[#6aa5ea] p-0 pt-0.5 font-bold">依附构件</th>
                  <th className="border-b border-[#6aa5ea] p-0 pt-0.5 font-bold">依附构件顶标高(m)</th>
                </tr>
              </thead>
              <tbody>
                <tr className="h-[21px]">
                  <td className="border-r border-b-2 border-r-[#c2c5c9] border-b-[#7b8087] p-0 pt-px pl-[3px]">DM-1</td>
                  <td className="border-r-2 border-b-2 border-[#7b8087] bg-[#d6e9fd] p-0 pt-px pl-[3px]">层底标高</td>
                </tr>
              </tbody>
            </table>
          </div>
        </div>
      </div>
    </section>
  );
}

function Separator() {
  return <div className="h-[18px] w-px bg-[#d0d0d0]" />;
}

function DialogToolbar() {
  return (
    <div className="flex h-[27px] items-center border-b border-[#d0d2d8] bg-white pt-px pl-px">
      <label className="relative block">
        <span className="sr-only">楼层</span>
        <select className="block h-[23px] w-[100px] appearance-none border border-[#a5a9af] bg-white pl-[3px]">
          <option>基础层</option>
        </select>
        <Caret className="pointer-events-none absolute top-2.5 right-1 text-[#555]" />
      </label>
      <div className="ml-[2px] flex items-center gap-2.5 pt-px text-[#333]">
        <Separator />
        <div className="flex items-center gap-[13px]">
          <CommandButton icon="layers" label="层间复制" />
          <CommandButton icon="save" label="存档" menu />
          <CommandButton icon="affix" label="添加前后缀" />
          <CommandButton icon="unused" label="删除未使用构件" />
        </div>
        <Separator />
        <div className="flex items-center gap-[14px]">
          <CommandButton icon="check" label="检查做法" />
          <CommandButton icon="gear" label="自动套方案维护" />
          <CommandButton icon="batch" label="批量自动套做法" />
        </div>
      </div>
    </div>
  );
}

function DefineDialog() {
  return (
    <main className="flex min-w-0 flex-1 flex-col bg-white">
      <h1 className="h-[27px] bg-[#2d7de0] pl-2 leading-[27px] text-white">定义</h1>
      <div className="flex flex-1 flex-col border-l-2 border-[#c2c5cc]">
        <DialogToolbar />
        <div className="flex flex-1">
          <NavTree />
          <div className="mr-[3px] ml-1 flex w-[318px] shrink-0 flex-col">
            <ComponentList />
            <PropertyList />
          </div>
          <TypeList />
          <DependentPanel />
        </div>
      </div>
    </main>
  );
}

const ARROWS = [
  { line: "M150 28 90 104", head: "77,120 89,87 106,101" },
  { line: "M78 118 119 392", head: "123,422 107,388 130,385" },
  { line: "M123 419 220 232", head: "233,203 206,229 235,243" },
  { line: "M233 207 252 239", head: "268,263 240,241 260,230" },
  { line: "M840 202 640 240", head: "609,246 641,228 645,251" },
  { line: "M848 209 634 268", head: "604,277 635,256 640,279" },
  { line: "M866 207 630 290", head: "600,300 628,278 637,299" },
  { line: "M844 201 798 234", head: "776,249 788,224 812,238" },
];

function ArrowOverlay() {
  return (
    <svg
      width="1512"
      height="810"
      viewBox="0 0 1512 810"
      className="pointer-events-none absolute top-0 left-0"
      aria-hidden="true"
    >
      {ARROWS.map((a) => (
        <g key={a.head} fill="#fb0000">
          <path d={a.line} stroke="#fb0000" strokeWidth="6" strokeLinecap="round" />
          <polygon points={a.head} />
        </g>
      ))}
    </svg>
  );
}

function App() {
  return (
    <div className="relative flex min-h-screen flex-col overflow-hidden bg-white font-['Noto_Sans','Noto_Sans_CJK_SC',sans-serif] text-[12px] leading-[18px] text-black">
      <MenuBar />
      <Ribbon />
      <div className="flex flex-1">
        <MainWindowEdge />
        <DefineDialog />
      </div>
      <ArrowOverlay />
    </div>
  );
}

export default App;
